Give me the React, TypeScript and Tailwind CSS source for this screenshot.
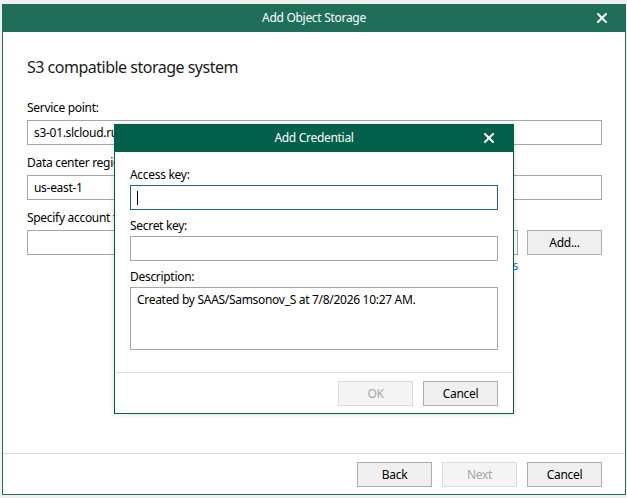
import React from "react";

const font = "font-['Segoe_UI','Noto_Sans',sans-serif] tracking-[-0.3px]";
const field = "h-[25px] w-full border border-[#a6a6a6] bg-white px-[6px] text-[12px] leading-[23px] text-black";
const labelCls = "block text-[12px] leading-[16px] text-black";
const btn = "h-[25px] w-[75px] border border-[#adadad] bg-[#efefef] text-[12px] text-black";
const btnOff = "h-[25px] w-[75px] border border-[#dcdcdc] bg-[#f4f4f4] text-[12px] text-[#a6a6a6]";

function CloseIcon({ size = 10 }: { size?: number }) {
  return (
    <svg width={size} height={size} viewBox="0 0 10 10" aria-hidden>
      <path d="M1 1 L9 9 M9 1 L1 9" stroke="white" strokeWidth="2" strokeLinecap="square" />
    </svg>
  );
}

function CredentialDialog() {
  return (
    <div className="absolute left-[114px] top-[124px] flex h-[290px] w-[400px] flex-col border border-[#006049] bg-white shadow-[0_0_6px_rgba(0,0,0,0.15)]">
      <div className="relative -mx-px -mt-px flex h-[28px] items-center justify-center bg-[#006049]">
        <span className="text-[12px] text-white">Add Credential</span>
        <span className="absolute right-[20px] top-[9px]">
          <CloseIcon />
        </span>
      </div>

      <div className="flex-1 px-[15px] pt-[15px]">
        <label className={labelCls}>Access key:</label>
        <div className="mt-[2px] flex h-[25px] items-center border border-[#1c62a5] px-[6px]">
          <span className="h-[14px] w-px bg-black" />
        </div>

        <label className={`${labelCls} mt-[8px]`}>Secret key:</label>
        <div className={`${field} mt-[2px]`} />

        <label className={`${labelCls} mt-[8px]`}>Description:</label>
        <div className="mt-[2px] h-[63px] border border-[#a6a6a6] px-[6px] pt-[4px] text-[12px] leading-[16px] text-black">
          Created by SAAS/Samsonov_S at 7/8/2026 10:27 AM.
        </div>
      </div>

      <div className="flex justify-end gap-[10px] border-t border-[#dadada] px-[15px] pt-[8px] pb-[7px]">
        <button className={btnOff} disabled>OK</button>
        <button className={btn}>Cancel</button>
      </div>
    </div>
  );
}

export default function App() {
  return (
    <div className={`relative h-[498px] w-[627px] overflow-hidden bg-[#f0f0f0] ${font}`}>
      <div className="ml-[2px] mt-[4px] flex h-[491px] w-[624px] flex-col border-x border-b border-[#1e6e5a] bg-white">
        {/* title bar */}
        <div className="relative -mx-px flex h-[28px] items-center justify-center bg-[#1e6e5a]">
          <span className="text-[12px] text-white">Add Object Storage</span>
          <span className="absolute right-[19px] top-[9px]">
            <CloseIcon />
          </span>
        </div>

        <div className="flex-1 pl-[24px] pr-[23px]">
          <h1 className="mt-[24px] text-[16px] leading-[22px] font-normal tracking-[-0.5px] text-[#1a1a1a]">
            S3 compatible storage system
          </h1>

          <label className={`${labelCls} mt-[22px]`}>Service point:</label>
          <div className={`${field} mt-[4px]`}>s3-01.slcloud.ru</div>

          <label className={`${labelCls} mt-[10px]`}>Data center region:</label>
          <div className={`${field} mt-[4px]`}>us-east-1</div>

          {/* mostly hidden under the credential dialog */}
          <label className={`${labelCls} mt-[10px]`}>Specify account to use for connecting:</label>
          <div className="mt-[4px] flex gap-[9px]">
            <div className="flex-1">
              <div className={field} />
              <div className="mt-[3px] text-right text-[12px] leading-[16px] text-[#1a6fc4]">Manage cloud accounts</div>
            </div>
            <button className={btn}>Add...</button>
          </div>
        </div>

        {/* footer */}
        <div className="flex justify-end gap-[10px] border-t border-[#d9d9d9] pr-[23px] pt-[8px] pb-[7px]">
          <button className={btn}>Back</button>
          <button className={btnOff} disabled>Next</button>
          <button className={btn}>Cancel</button>
        </div>
      </div>

      <CredentialDialog />
    </div>
  );
}
